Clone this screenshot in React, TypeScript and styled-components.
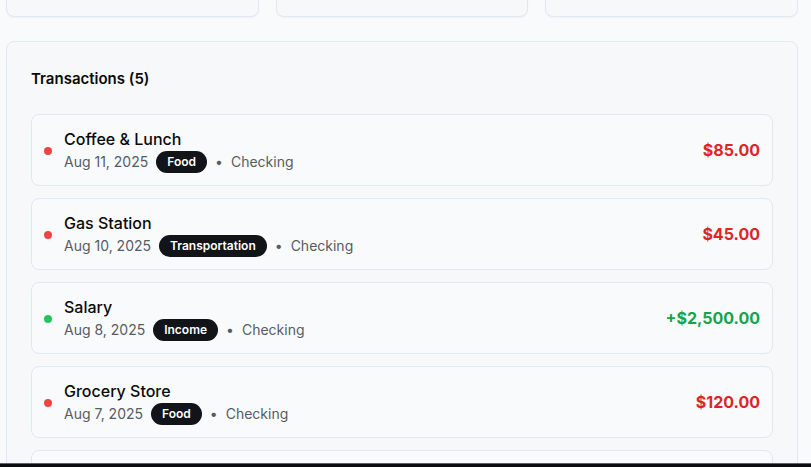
import React from "react";
import styled, { createGlobalStyle } from "styled-components";

const Global = createGlobalStyle`
  html, body { margin: 0; padding: 0; background: #f8fafc; overflow: hidden; }
  body { font-family: Inter, "Noto Sans", sans-serif; color: #0f172a; }
  * { box-sizing: border-box; }
`;

const Page = styled.div`
  padding: 0 13px 0 6px;
  display: flex;
  flex-direction: column;
  gap: 24px;
`;

const StatsRow = styled.div`
  display: grid;
  grid-template-columns: repeat(3, 1fr);
  gap: 17px;
  margin-top: -84px;
`;

const StatCard = styled.div`
  height: 101px;
  background: #f7f8f9;
  border: 1px solid #e2e8f0;
  border-radius: 8px;
  box-shadow: 0 1px 2px rgba(15, 23, 42, 0.04);
`;

const Card = styled.section`
  background: #f7f8f9;
  border: 1px solid #e2e8f0;
  border-radius: 8px;
  padding: 25px 24px 24px 24px;
  min-height: 500px;
`;

const Title = styled.h2`
  margin: 0 0 23px 0;
  font-size: 15px;
  line-height: 24px;
  font-weight: 600;
  color: #0a0a0a;
`;

const List = styled.div`
  display: flex;
  flex-direction: column;
  gap: 12px;
`;

const Row = styled.div`
  display: flex;
  align-items: center;
  justify-content: space-between;
  background: #f8fafc;
  border: 1px solid #e2e8f0;
  border-radius: 8px;
  padding: 12px 12px;
  height: 72px;
`;

const Left = styled.div`
  display: flex;
  align-items: center;
  gap: 12px;
`;

const Dot = styled.span<{ $income: boolean }>`
  width: 8px;
  height: 8px;
  border-radius: 50%;
  background: ${(p) => (p.$income ? "#22c55e" : "#ef4444")};
  flex-shrink: 0;
  margin-top: 2px;
`;

const Info = styled.div`
  display: flex;
  flex-direction: column;
`;

const Name = styled.div`
  font-size: 16px;
  line-height: 24px;
  font-weight: 500;
  color: #0a0a0a;
`;

const Meta = styled.div`
  display: flex;
  align-items: center;
  gap: 8px;
  font-size: 14px;
  line-height: 22px;
  color: #575c64;
`;

const Badge = styled.span`
  background: #111418;
  color: #fff;
  font-size: 12px;
  font-weight: 600;
  line-height: 16px;
  padding: 3px 11px;
  border-radius: 999px;
`;

const Bullet = styled.span`
  font-size: 14px;
  color: #575c64;
`;

const Amount = styled.div<{ $income: boolean }>`
  font-size: 16px;
  font-weight: 700;
  color: ${(p) => (p.$income ? "#16a34a" : "#dc2626")};
`;

const BottomBar = styled.div`
  position: fixed;
  left: 0;
  right: 0;
  bottom: 0;
  height: 4px;
  background: #0b0b12;
  border-top: 1px solid #5a4fd6;
`;

type Tx = { name: string; date: string; cat: string; amount: string; income: boolean };

const txs: Tx[] = [
  { name: "Coffee & Lunch", date: "Aug 11, 2025", cat: "Food", amount: "$85.00", income: false },
  { name: "Gas Station", date: "Aug 10, 2025", cat: "Transportation", amount: "$45.00", income: false },
  { name: "Salary", date: "Aug 8, 2025", cat: "Income", amount: "+$2,500.00", income: true },
  { name: "Grocery Store", date: "Aug 7, 2025", cat: "Food", amount: "$120.00", income: false },
  { name: "Electric Bill", date: "Aug 5, 2025", cat: "Utilities", amount: "$95.00", income: false },
];

export default function App() {
  return (
    <>
      <Global />
      <Page>
        <StatsRow>
          <StatCard />
          <StatCard />
          <StatCard />
        </StatsRow>
        <Card>
          <Title>Transactions (5)</Title>
          <List>
            {txs.map((t) => (
              <Row key={t.name}>
                <Left>
                  <Dot $income={t.income} />
                  <Info>
                    <Name>{t.name}</Name>
                    <Meta>
                      <span>{t.date}</span>
                      <Badge>{t.cat}</Badge>
                      <Bullet>•</Bullet>
                      <span>Checking</span>
                    </Meta>
                  </Info>
                </Left>
                <Amount $income={t.income}>{t.amount}</Amount>
              </Row>
            ))}
          </List>
        </Card>
      </Page>
      <BottomBar />
    </>
  );
}
